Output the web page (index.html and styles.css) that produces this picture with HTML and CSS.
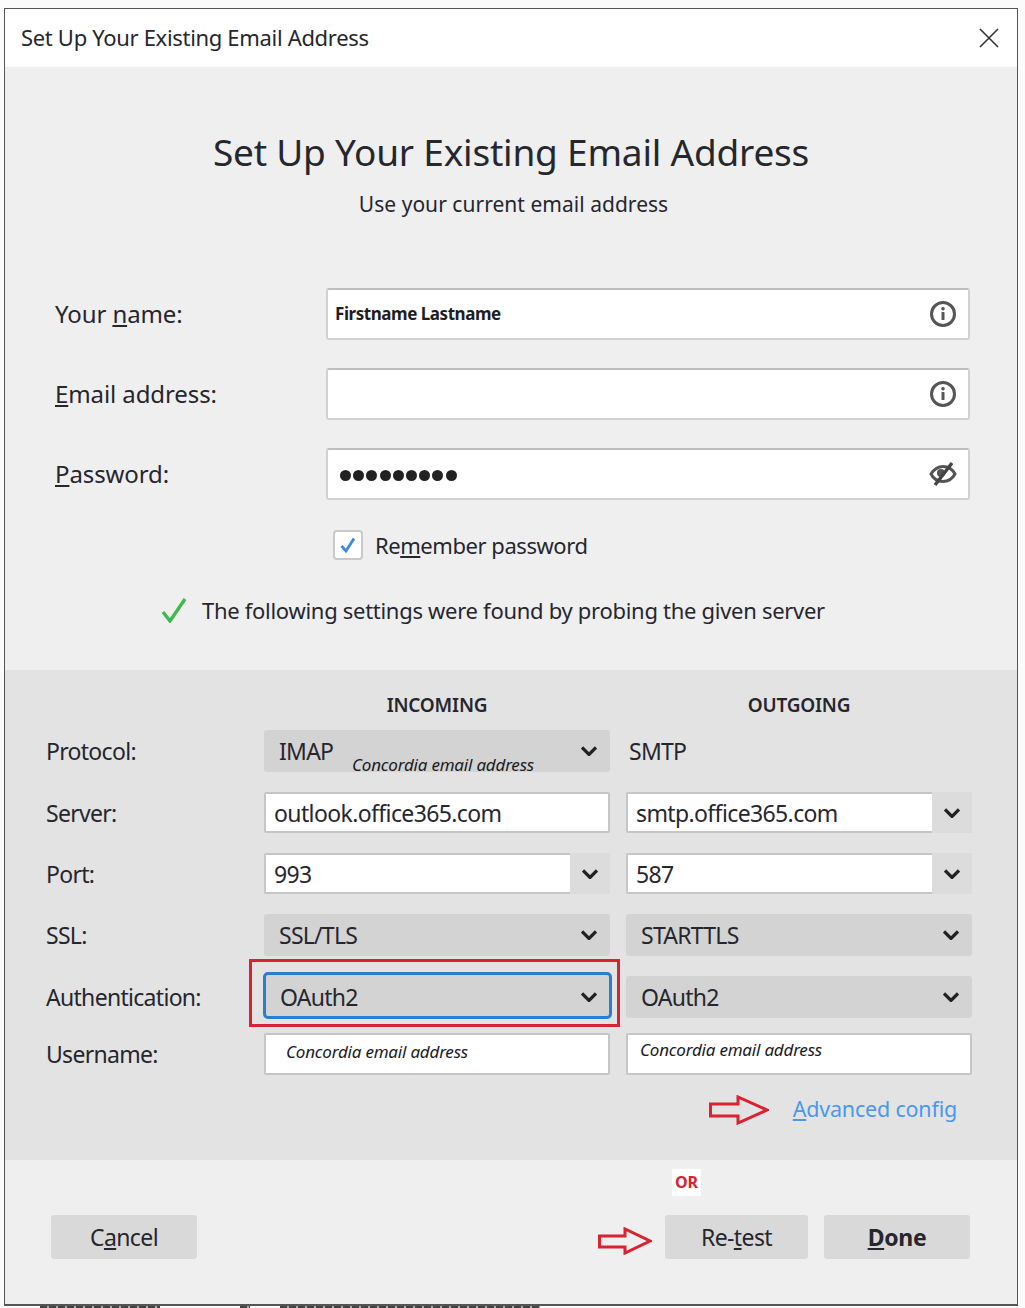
FILE: index.html
```html
<!DOCTYPE html>
<html lang="en">
  <head>
    <meta charset="UTF-8" />
    <meta name="viewport" content="width=device-width, initial-scale=1.0" />
    <title>Set Up Your Existing Email Address</title>
    <link rel="stylesheet" href="styles.css">
  </head>

  <body>
    <div class="dialog">
      <div class="title-bar">
        <span>Set Up Your Existing Email Address</span>
        <svg class="close-icon" width="20" height="20" viewBox="0 0 20 20">
          <path d="M1 1 L19 19 M19 1 L1 19" />
        </svg>
      </div>

      <div class="intro">
        <h1>Set Up Your Existing Email Address</h1>
        <p>Use your current email address</p>
      </div>

      <div class="account-form">
        <div class="form-row">
          <label>Your <u>n</u>ame:</label>
          <div class="text-box">
            <span class="name-value">Firstname Lastname</span>
            <svg class="box-icon" width="28" height="28" viewBox="0 0 28 28">
              <circle cx="14" cy="14" r="11.5" class="ring" />
              <rect x="12.5" y="12" width="3" height="8" rx="0.6" class="dot" />
              <circle cx="14" cy="8.8" r="1.8" class="dot" />
            </svg>
          </div>
        </div>
        <div class="form-row">
          <label><u>E</u>mail address:</label>
          <div class="text-box">
            <svg class="box-icon" width="28" height="28" viewBox="0 0 28 28">
              <circle cx="14" cy="14" r="11.5" class="ring" />
              <rect x="12.5" y="12" width="3" height="8" rx="0.6" class="dot" />
              <circle cx="14" cy="8.8" r="1.8" class="dot" />
            </svg>
          </div>
        </div>
        <div class="form-row">
          <label><u>P</u>assword:</label>
          <div class="text-box">
            <span class="dots">
              <i></i><i></i><i></i><i></i><i></i><i></i><i></i><i></i><i></i>
            </span>
            <svg class="box-icon" width="28" height="28" viewBox="0 0 28 28">
              <path d="M2 14 C6 8 10 6.5 14 6.5 C18 6.5 23 8.5 26 14 C23 19.5 18 21.5 14 21.5 C10 21.5 5 20 2 14 Z" class="eye" />
              <circle cx="12" cy="13" r="4" class="dot" />
              <path d="M6 25 L23 3" class="slash" />
            </svg>
          </div>
        </div>
        <div class="remember">
          <span class="check-box">
            <svg width="20" height="20" viewBox="0 0 20 20">
              <path d="M3.5 11 L8 16 L16 3.5" />
            </svg>
          </span>
          <span>Re<u>m</u>ember password</span>
        </div>
        <div class="found-status">
          <svg width="26" height="26" viewBox="0 0 26 26">
            <path d="M2 15 L9 24 L24 2" />
          </svg>
          <span>The following settings were found by probing the given server</span>
        </div>
      </div>

      <div class="server-config">
        <div class="config-row heading-row">
          <span></span>
          <span class="col-title">INCOMING</span>
          <span class="col-title">OUTGOING</span>
        </div>

        <div class="config-row">
          <span class="config-label">Protocol:</span>
          <div class="select-box">
            <span>IMAP</span>
            <span class="note imap-note">Concordia email address</span>
            <svg class="chevron" width="16" height="10" viewBox="0 0 16 10"><path d="M1 1.5 L8 8.5 L15 1.5" /></svg>
          </div>
          <span class="plain-value">SMTP</span>
        </div>

        <div class="config-row">
          <span class="config-label">Server:</span>
          <div class="combo-box"><span class="combo-text">outlook.office365.com</span></div>
          <div class="combo-box">
            <span class="combo-text">smtp.office365.com</span>
            <span class="combo-btn"><svg class="chevron" width="16" height="10" viewBox="0 0 16 10"><path d="M1 1.5 L8 8.5 L15 1.5" /></svg></span>
          </div>
        </div>

        <div class="config-row">
          <span class="config-label">Port:</span>
          <div class="combo-box">
            <span class="combo-text">993</span>
            <span class="combo-btn"><svg class="chevron" width="16" height="10" viewBox="0 0 16 10"><path d="M1 1.5 L8 8.5 L15 1.5" /></svg></span>
          </div>
          <div class="combo-box">
            <span class="combo-text">587</span>
            <span class="combo-btn"><svg class="chevron" width="16" height="10" viewBox="0 0 16 10"><path d="M1 1.5 L8 8.5 L15 1.5" /></svg></span>
          </div>
        </div>

        <div class="config-row">
          <span class="config-label">SSL:</span>
          <div class="select-box">
            <span>SSL/TLS</span>
            <svg class="chevron" width="16" height="10" viewBox="0 0 16 10"><path d="M1 1.5 L8 8.5 L15 1.5" /></svg>
          </div>
          <div class="select-box">
            <span>STARTTLS</span>
            <svg class="chevron" width="16" height="10" viewBox="0 0 16 10"><path d="M1 1.5 L8 8.5 L15 1.5" /></svg>
          </div>
        </div>

        <div class="config-row auth-row">
          <span class="config-label">Authentication:</span>
          <div class="select-box focused">
            <span>OAuth2</span>
            <svg class="chevron" width="16" height="10" viewBox="0 0 16 10"><path d="M1 1.5 L8 8.5 L15 1.5" /></svg>
            <span class="red-frame"></span>
          </div>
          <div class="select-box">
            <span>OAuth2</span>
            <svg class="chevron" width="16" height="10" viewBox="0 0 16 10"><path d="M1 1.5 L8 8.5 L15 1.5" /></svg>
          </div>
        </div>

        <div class="config-row user-row">
          <span class="config-label">Username:</span>
          <div class="combo-box user-box"><span class="note">Concordia email address</span></div>
          <div class="combo-box user-box right"><span class="note">Concordia email address</span></div>
        </div>

        <div class="advanced">
          <svg class="red-arrow" width="60" height="30" viewBox="0 0 60 30">
            <path d="M1.5 9 H29 V2 L58 15 L29 28 V21 H1.5 Z" />
          </svg>
          <a href="#"><u>A</u>dvanced config</a>
        </div>
      </div>

      <div class="footer">
        <span class="or-tag">OR</span>
        <div class="footer-buttons">
          <button class="btn"><span>C<u>a</u>ncel</span></button>
          <div class="footer-right">
            <svg class="red-arrow" width="54" height="28" viewBox="0 0 54 28">
              <path d="M1.5 9 H27 V2 L52 14 L27 26 V20 H1.5 Z" />
            </svg>
            <button class="btn retest"><span>Re-<u>t</u>est</span></button>
            <button class="btn done"><span><u>D</u>one</span></button>
          </div>
        </div>
      </div>
    </div>
    <div class="behind-strip">
      <span class="piece-a"></span>
      <span class="piece-b"></span>
      <span class="piece-c"></span>
    </div>
  </body>
</html>
```

FILE: styles.css
```css
* {
  margin: 0;
  padding: 0;
  box-sizing: border-box;
  font-family: "Noto Sans", sans-serif;
}

body {
  width: 1025px;
  height: 1308px;
  padding: 8px 7px 0 4px;
  background-color: #fbfbfb;
  overflow: hidden;
  color: #26262e;
}

.dialog {
  width: 1014px;
  height: 1298px;
  border: 1px solid #555;
  border-bottom-width: 2px;
  background-color: #efefef;
}

.title-bar {
  height: 58px;
  padding: 0 18px 2px 16px;
  background-color: white;
  display: flex;
  justify-content: space-between;
  align-items: center;
  font-size: 22px;
  letter-spacing: -0.32px;
  color: #26262c;
}

.close-icon {
  margin-top: 2px;
}

.close-icon path {
  fill: none;
  stroke: #333;
  stroke-width: 1.6;
}

.intro {
  height: 208px;
  padding-top: 56px;
  text-align: center;
}

.intro h1 {
  font-size: 37px;
  font-weight: 400;
  line-height: 58px;
  letter-spacing: -0.2px;
}

.intro p {
  font-size: 21px;
  line-height: 30px;
  margin-top: 8px;
  margin-left: 5px;
  letter-spacing: 0.03px;
}

.account-form {
  height: 395px;
  padding: 13px 47px 0 50px;
}

.form-row {
  display: flex;
  align-items: center;
  margin-bottom: 28px;
}

.form-row label {
  width: 271px;
  padding-bottom: 2px;
  font-size: 24px;
  letter-spacing: -0.1px;
}

.text-box {
  flex: 1;
  height: 52px;
  padding: 0 11px 0 7px;
  background-color: white;
  border: 2px solid #d2d2d2;
  border-top-color: #bdbdbd;
  border-radius: 3px;
  display: flex;
  justify-content: space-between;
  align-items: center;
}

.box-icon {
  margin-left: auto;
}

.ring {
  fill: none;
  stroke: #555;
  stroke-width: 3;
}

.dot {
  fill: #555;
}

.eye {
  fill: none;
  stroke: #555;
  stroke-width: 3;
}

.slash {
  fill: none;
  stroke: #444;
  stroke-width: 3.4;
}

.name-value {
  font-size: 17px;
  font-weight: 700;
  letter-spacing: -0.45px;
  color: #1d1d22;
  padding-bottom: 2px;
}

.dots {
  display: flex;
  gap: 2.2px;
  padding-left: 5px;
  padding-top: 2px;
}

.dots i {
  width: 11px;
  height: 11px;
  border-radius: 50%;
  background-color: #222;
}

.remember {
  display: flex;
  align-items: center;
  gap: 12px;
  margin-top: 30px;
  padding-left: 278px;
  font-size: 22px;
  letter-spacing: -0.45px;
}

.check-box {
  width: 30px;
  height: 30px;
  background-color: white;
  border: 2px solid #c9c9c9;
  border-radius: 4px;
  display: flex;
  justify-content: center;
  align-items: center;
}

.check-box path {
  fill: none;
  stroke: #3f8ad8;
  stroke-width: 2.8;
}

.found-status {
  display: flex;
  align-items: center;
  gap: 15px;
  margin-top: 35px;
  padding-left: 106px;
  font-size: 22px;
  letter-spacing: -0.29px;
}

.found-status path {
  fill: none;
  stroke: #3fb950;
  stroke-width: 3.4;
}

.server-config {
  height: 490px;
  padding: 22px 45px 0 41px;
  background-color: #e3e3e3;
}

.config-row {
  display: grid;
  grid-template-columns: 202px 346px 346px;
  column-gap: 16px;
  align-items: center;
  min-height: 41px;
  margin-bottom: 20px;
  font-size: 23px;
}

.config-label {
  letter-spacing: -0.7px;
}

.heading-row {
  min-height: 26px;
  margin-bottom: 12px;
}

.col-title {
  font-size: 19px;
  font-weight: 600;
  text-align: center;
  letter-spacing: -0.2px;
}

.select-box {
  position: relative;
  height: 42px;
  padding: 0 13px 0 15px;
  background-color: #d3d3d3;
  border-radius: 3px;
  display: flex;
  justify-content: space-between;
  align-items: center;
  letter-spacing: -0.75px;
}

.chevron path {
  fill: none;
  stroke: #222;
  stroke-width: 3.2;
}

.plain-value {
  padding-left: 3px;
  letter-spacing: -0.75px;
}

.note {
  font-size: 17px;
  font-style: italic;
  color: #1b1b1f;
  letter-spacing: -0.2px;
}

.imap-note {
  position: absolute;
  left: 88px;
  top: 23px;
  white-space: nowrap;
}

.combo-box {
  height: 41px;
  background-color: white;
  border: 2px solid #c6c6c6;
  border-radius: 2px;
  display: flex;
  align-items: center;
  justify-content: space-between;
  letter-spacing: -0.62px;
}

.combo-text {
  padding-left: 8px;
}

.combo-btn {
  width: 40px;
  height: 41px;
  margin-right: -2px;
  background-color: #dcdcdc;
  display: flex;
  justify-content: center;
  align-items: center;
}

.focused {
  height: 47px;
  margin: -4px -2px -1px -1px;
  padding: 3px 12px 0 14px;
  border: 3px solid #2b7cd3;
  border-radius: 5px;
}

.red-frame {
  position: absolute;
  left: -17px;
  right: -11px;
  top: -16px;
  bottom: -11px;
  border: 3px solid #d92232;
}

.auth-row {
  margin-bottom: 15px;
}

.user-row {
  margin-bottom: 0;
}

.user-box {
  height: 42px;
  padding: 0 0 6px 20px;
}

.user-box.right {
  padding: 0 0 10px 12px;
}

.advanced {
  display: flex;
  justify-content: flex-end;
  align-items: center;
  gap: 24px;
  margin-top: 19px;
  padding-right: 15px;
}

.advanced a {
  font-size: 21.5px;
  color: #4a98ee;
  text-decoration: none;
  letter-spacing: -0.2px;
  padding-bottom: 2px;
}

.red-arrow path {
  fill: none;
  stroke: #d92232;
  stroke-width: 3;
}

.footer {
  position: relative;
  height: 144px;
  padding: 55px 47px 0 46px;
}

.or-tag {
  position: absolute;
  left: 667px;
  top: 9px;
  width: 29px;
  height: 27px;
  background-color: white;
  color: #d92232;
  font-size: 16px;
  font-weight: 700;
  text-align: center;
  line-height: 27px;
}

.footer-buttons {
  display: flex;
  justify-content: space-between;
  align-items: center;
}

.footer-right {
  display: flex;
  align-items: center;
  gap: 16px;
}

.footer-right .red-arrow {
  margin-right: -3px;
  margin-top: 8px;
}

.btn {
  width: 146px;
  height: 44px;
  background-color: #d9d9d9;
  border: none;
  border-radius: 3px;
  font-size: 23px;
  letter-spacing: -0.6px;
  color: #26262e;
}

.retest {
  width: 143px;
}

.done {
  font-weight: 700;
  letter-spacing: -0.3px;
}

/* dark scraps of the window behind the dialog, at the very bottom */
.behind-strip {
  height: 2px;
  display: flex;
}

.behind-strip span {
  height: 2px;
  background: repeating-linear-gradient(90deg, #444 0 7px, #aaa 7px 9px);
}

.piece-a {
  width: 120px;
  margin-left: 36px;
}

.piece-b {
  width: 10px;
  margin-left: 80px;
}

.piece-c {
  width: 260px;
  margin-left: 30px;
}
```
